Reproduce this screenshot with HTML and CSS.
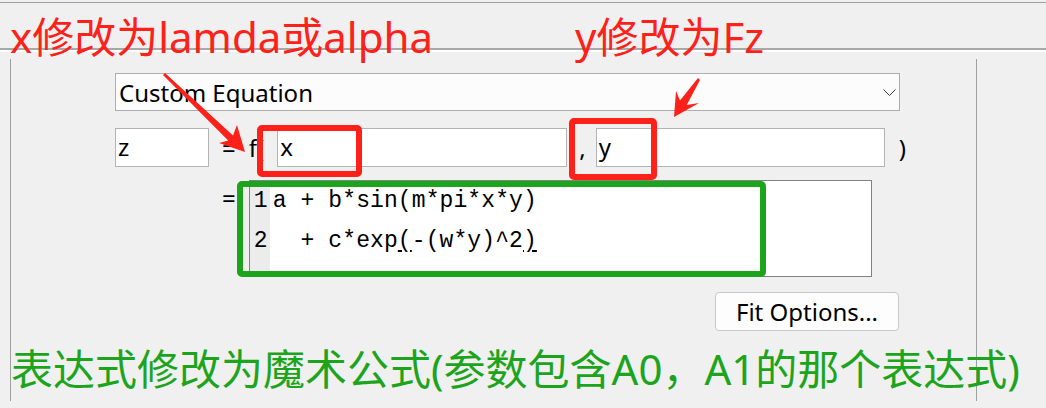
FILE: index.html
```html
<!DOCTYPE html>
<html>
<head>
    <meta charset="UTF-8">
    <title>Custom Equation</title>
    <link rel="stylesheet" href="styles.css">
</head>
<body>
    <div class="top-rule"></div>
    <div class="band"></div>

    <div class="panel">
        <div class="frame">
            <!-- Tipo de ajuste -->
            <div class="combo">
                <span>Custom Equation</span>
                <svg class="chevron" width="13" height="8" viewBox="0 0 13 8">
                    <polyline points="0.5,0.5 6.5,6.5 12.5,0.5" fill="none" stroke="#3c3c3c" stroke-width="1"/>
                </svg>
            </div>

            <!-- z = f(x, y) -->
            <div class="row vars">
                <div class="field f-z">z</div>
                <span class="eq">=</span>
                <span class="fn">f(</span>
                <div class="field f-x">x</div>
                <span class="comma">,</span>
                <div class="field f-y">y</div>
                <span class="paren">)</span>
            </div>

            <!-- Expresión -->
            <div class="row expr">
                <span class="eq">=</span>
                <div class="editor">
                    <div class="gutter">
                        <div>1</div>
                        <div>2</div>
                    </div>
                    <div class="code">
                        <div class="line">a + b*sin(m*pi*x*y)</div>
                        <div class="line">  + c*exp<u>(</u>-(w*y)^2<u>)</u></div>
                    </div>
                </div>
            </div>

            <div class="row actions">
                <button class="btn">Fit Options...</button>
            </div>
        </div>
    </div>

    <!-- Anotaciones -->
    <div class="note note-red note-x">x修改为lamda或alpha</div>
    <div class="note note-red note-y">y修改为Fz</div>
    <div class="note note-green note-expr">表达式修改为魔术公式(参数包含A0，A1的那个表达式)</div>

    <div class="mark mark-x"></div>
    <div class="mark mark-y"></div>
    <div class="mark mark-expr"></div>

    <svg class="arrows" width="1046" height="408" viewBox="0 0 1046 408">
        <polygon points="165,73 233,135.6 237,125 245,152 219,143 228.2,140.6 163,75" fill="#fe2119"/>
        <polygon points="700,80 686.7,105 699,103 674,117 676,91 680,100.6 698,78" fill="#fe2119"/>
    </svg>
</body>
</html>
```

FILE: styles.css
```css
/* Ventana de ajuste personalizado */
body {
    font-family: "Noto Sans", "Noto Sans CJK SC", sans-serif;
    font-size: 24px;
    background-color: #f0f0f0;
    color: #000;
    margin: 0;
    padding: 0;
    width: 1046px;
    height: 408px;
    overflow: hidden;
    position: relative;
}

.top-rule {
    margin-top: 2px;
    border-top: 1px solid #a0a0a0;
}

.band {
    height: 45px;
}

.panel {
    border-top: 2px solid #a8a8a8;
}

.panel::before {
    content: "";
    display: block;
    border-top: 2px solid #fff;
}

.frame {
    margin-left: 10px;
    width: 967px;
    height: 349px;
    padding: 21px 0 0 105px;
    box-sizing: border-box;
    position: relative;
}

.frame::before {
    content: "";
    position: absolute;
    left: 0;
    top: 7px;
    bottom: 0;
    right: 0;
    border-left: 1px solid #a0a0a0;
    border-right: 1px solid #a0a0a0;
}

.combo {
    width: 785px;
    height: 38px;
    box-sizing: border-box;
    border: 1px solid #adadad;
    background-color: #fcfcfc;
    display: flex;
    align-items: center;
    justify-content: space-between;
    padding: 0 3px 0 3px;
    line-height: 36px;
}

.combo span {
    margin-top: 2px;
}

.combo .chevron {
    margin-top: 2px;
}

.row {
    display: flex;
}

.vars {
    margin-top: 17px;
    height: 39px;
    align-items: center;
}

.field {
    height: 39px;
    box-sizing: border-box;
    border: 1px solid #b4b4b4;
    background-color: #fff;
    padding: 0 2px;
    line-height: 35px;
}

.f-z { width: 94px; }
.f-x { width: 290px; }
.f-y { width: 289px; }

.eq {
    margin: 0 13px;
}

.fn {
    margin-right: 13px;
}

.comma {
    margin: 0 10px 0 12px;
}

.paren {
    margin-left: 14px;
}

.expr {
    margin-top: 13px;
    padding-left: 94px;
    align-items: flex-start;
}

.expr .eq {
    line-height: 36px;
}

.editor {
    width: 623px;
    height: 97px;
    box-sizing: border-box;
    border: 1px solid #828282;
    background-color: #fff;
    display: flex;
    font-family: "Liberation Mono", monospace;
    font-size: 23px;
    letter-spacing: 0.1px;
    line-height: 40px;
}

.gutter {
    width: 20px;
    background-color: #ececec;
    text-align: right;
    padding-right: 2px;
    box-sizing: border-box;
}

.code {
    padding-left: 3px;
}

.code .line {
    white-space: pre;
}

.code u {
    text-underline-offset: 3px;
}

.actions {
    margin-top: 15px;
    padding-left: 600px;
}

.btn {
    width: 184px;
    height: 39px;
    font-family: "Noto Sans", sans-serif;
    font-size: 24px;
    color: #000;
    background-color: #fdfdfd;
    border: 1px solid #c8c8c8;
    border-radius: 4px;
    padding: 0;
    line-height: 37px;
}

/* Anotaciones encima de la captura */
.note {
    position: absolute;
    font-size: 42px;
    line-height: 42px;
    white-space: nowrap;
}

.note-red { color: #fe2119; }
.note-green { color: #1ca51c; }

.note-x { left: 10px; top: 16px; }
.note-y { left: 575px; top: 16px; }
.note-expr { left: 11px; top: 348px; }

.mark {
    position: absolute;
    box-sizing: border-box;
    border: 6px solid #fe2119;
    border-radius: 5px;
}

.mark-x { left: 257px; top: 125px; width: 105px; height: 52px; }
.mark-y { left: 569px; top: 118px; width: 88px; height: 62px; }

.mark-expr {
    left: 237px;
    top: 181px;
    width: 529px;
    height: 96px;
    border-color: #1ca51c;
}

.arrows {
    position: absolute;
    left: 0;
    top: 0;
    pointer-events: none;
}
```
